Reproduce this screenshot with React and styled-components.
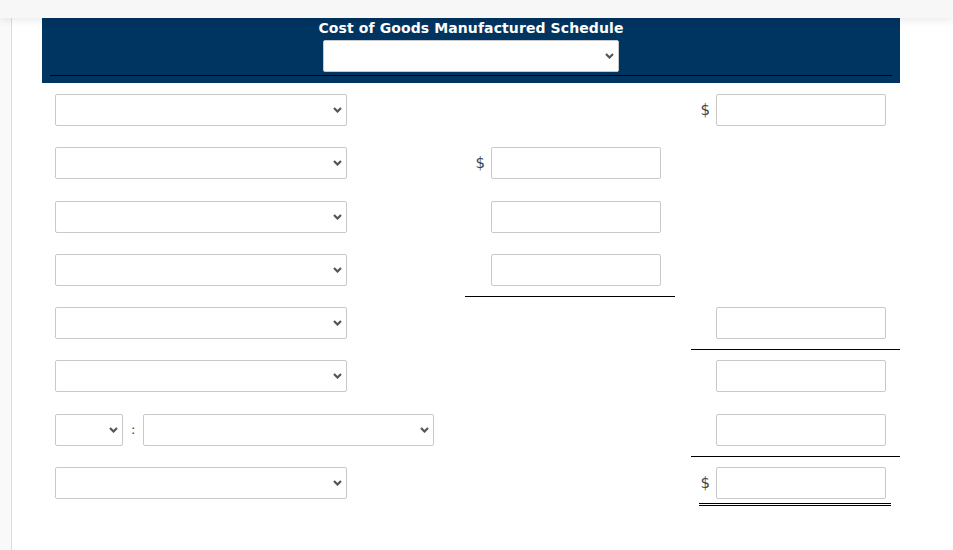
import React from 'react';
import styled, { createGlobalStyle } from 'styled-components';

const GlobalStyle = createGlobalStyle`
  html, body {
    margin: 0;
    padding: 0;
    background: #fff;
    font-family: 'DejaVu Sans', Verdana, sans-serif;
  }
`;

const TopBar = styled.div`
  position: relative;
  z-index: 2;
  height: 18px;
  background: #f7f7f7;
  box-shadow: 0 2px 8px rgba(0, 0, 0, 0.09);
`;

const Layout = styled.div`
  display: flex;
  min-height: calc(100vh - 18px);
`;

const Sidebar = styled.div`
  width: 11px;
  flex-shrink: 0;
  background: #f9f9f9;
  border-right: 1px solid #dcdcdc;
`;

const Main = styled.div`
  flex: 1;
  padding-left: 30px;
`;

const Panel = styled.div`
  width: 858px;
  height: 65px;
  box-sizing: border-box;
  background: #003461;
  display: flex;
  flex-direction: column;
  align-items: center;
  padding: 1px 8px 0;
`;

const Title = styled.div`
  color: #fff;
  font-weight: bold;
  font-size: 14px;
  line-height: 18px;
  letter-spacing: 0.1px;
`;

const PanelRule = styled.div`
  align-self: stretch;
  height: 1px;
  background: #000;
  margin-top: 3px;
`;

const Grid = styled.div`
  display: grid;
  grid-template-columns: 394px 210px 209px;
  column-gap: 16px;
  margin-top: 11px;
  margin-left: 13px;
  grid-auto-rows: 53.3px;
`;

const Cell = styled.div`
  display: flex;
  align-items: flex-start;
`;

const AmountCell = styled.div`
  display: flex;
  flex-direction: column;
  align-items: stretch;
`;

const AmountLine = styled.div`
  display: flex;
  justify-content: flex-end;
  align-items: center;
  padding-right: 14px;
  height: 32px;
`;

const Rule = styled.div`
  margin-top: 10px;
  height: 1px;
  background: #000;
`;

const DoubleRule = styled.div`
  margin-top: 4px;
  margin-left: 8px;
  margin-right: 9px;
  height: 1px;
  border-top: 1px solid #000;
  border-bottom: 1px solid #000;
`;

const Dollar = styled.span`
  color: #3f454a;
  font-size: 15px;
  margin-right: 6px;
`;

const Input = styled.input`
  width: 170px;
  height: 32px;
  box-sizing: border-box;
  border: 1px solid #c9c9c9;
  border-radius: 2px;
  background: #fff;
  padding: 0 6px;
  font-size: 14px;
  outline: none;
`;

const SelectWrap = styled.div`
  position: relative;
  width: ${(p) => p.$w}px;
  height: 32px;
  flex-shrink: 0;
  margin-top: ${(p) => p.$top || 0}px;
`;

const Select = styled.select`
  appearance: none;
  width: 100%;
  height: 100%;
  box-sizing: border-box;
  border: 1px solid #c9c9c9;
  border-radius: 2px;
  background: #fff;
  font-size: 14px;
  padding: 0 24px 0 6px;
  outline: none;
`;

const Chevron = styled.svg`
  position: absolute;
  right: 5px;
  top: 13px;
  width: 9px;
  height: 6px;
  pointer-events: none;
`;

const Colon = styled.span`
  font-size: 13px;
  color: #333;
  margin: 0 8px;
  line-height: 32px;
`;

const Dropdown = ({ w, top }) => (
  <SelectWrap $w={w} $top={top}>
    <Select defaultValue="">
      <option value=""></option>
    </Select>
    <Chevron viewBox="0 0 9 6">
      <path d="M1 1 L4.5 4.5 L8 1" fill="none" stroke="#555" strokeWidth="2.2" />
    </Chevron>
  </SelectWrap>
);

const Amount = ({ dollar, rule, double }) => (
  <AmountCell>
    <AmountLine>
      {dollar && <Dollar>$</Dollar>}
      <Input type="text" />
    </AmountLine>
    {rule && <Rule />}
    {double && <DoubleRule />}
  </AmountCell>
);

const rows = [
  { mid: null, right: { dollar: true } },
  { mid: { dollar: true }, right: null },
  { mid: {}, right: null },
  { mid: { rule: true }, right: null },
  { mid: null, right: { rule: true } },
  { mid: null, right: {} },
  { split: true, mid: null, right: { rule: true } },
  { mid: null, right: { dollar: true, double: true } },
];

export default function App() {
  return (
    <>
      <GlobalStyle />
      <TopBar />
      <Layout>
        <Sidebar />
        <Main>
          <Panel>
            <Title>Cost of Goods Manufactured Schedule</Title>
            <Dropdown w={296} top={3} />
            <PanelRule />
          </Panel>
          <Grid>
            {rows.map((r, i) => (
              <React.Fragment key={i}>
                <Cell>
                  {r.split ? (
                    <>
                      <Dropdown w={68} />
                      <Colon>:</Colon>
                      <Dropdown w={291} />
                    </>
                  ) : (
                    <Dropdown w={292} />
                  )}
                </Cell>
                <div>{r.mid && <Amount {...r.mid} />}</div>
                <div>{r.right && <Amount {...r.right} />}</div>
              </React.Fragment>
            ))}
          </Grid>
        </Main>
      </Layout>
    </>
  );
}
